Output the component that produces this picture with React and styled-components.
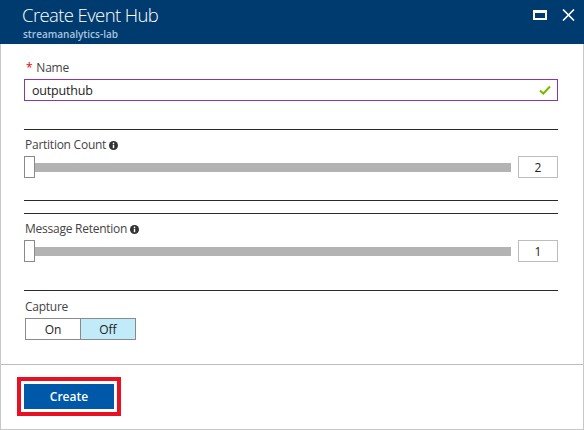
import React, { useState } from 'react';
import styled, { createGlobalStyle } from 'styled-components';

const GlobalStyle = createGlobalStyle`
  html, body {
    margin: 0;
    padding: 0;
    background: #fff;
  }
  body {
    font-family: 'Segoe UI', 'Open Sans', 'Liberation Sans', sans-serif;
    color: #333;
  }
`;

const Blade = styled.div`
  width: 584px;
  height: 430px;
  display: flex;
  flex-direction: column;
  box-sizing: border-box;
`;

const Header = styled.div`
  height: 44px;
  background: #003b6f;
  display: flex;
  align-items: flex-start;
  justify-content: space-between;
  padding: 0 9px 0 22px;
  box-sizing: border-box;
`;

const TitleBlock = styled.div`
  display: flex;
  flex-direction: column;
`;

const Title = styled.div`
  color: #fff;
  font-size: 18.5px;
  font-weight: 300;
  line-height: 24px;
  margin-top: 3px;
  letter-spacing: -0.6px;
`;

const Subtitle = styled.div`
  color: #a9c5df;
  font-size: 10px;
  font-weight: 600;
  line-height: 12px;
  margin-top: 1px;
  margin-left: 1px;
`;

const WindowButtons = styled.div`
  display: flex;
  align-items: center;
  gap: 15px;
  margin-top: 9px;
`;

const MaxIcon = styled.div`
  width: 14px;
  height: 10px;
  box-sizing: border-box;
  border: 2px solid #fff;
  border-top-width: 3px;
`;

const Body = styled.div`
  flex: 1;
  display: flex;
  flex-direction: column;
  border-left: 1px solid #c8c8c8;
  border-right: 1px solid #c8c8c8;
`;

const Content = styled.div`
  padding: 16px 25px 0 23px;
  display: flex;
  flex-direction: column;
`;

const Label = styled.div`
  font-size: 12px;
  line-height: 16px;
  height: 16px;
  color: #444;
  display: flex;
  align-items: center;
  gap: 3px;
  letter-spacing: -0.25px;
  margin-top: ${(p) => p.$top || 0}px;
  margin-left: 1px;
`;

const Required = styled.span`
  color: #e00;
  font-size: 12px;
  margin-right: 4px;
  margin-left: 1px;
`;

const InputBox = styled.div`
  margin-top: 3px;
  height: 22px;
  box-sizing: border-box;
  border: 1px solid #8c35a9;
  display: flex;
  align-items: center;
  justify-content: space-between;
  padding: 0 6px 0 7px;
  font-size: 12.5px;
  letter-spacing: -0.2px;
  color: #222;
`;

const Rule = styled.div`
  height: 1px;
  background: #2a2a2a;
  margin-top: ${(p) => p.$top || 0}px;
`;

const SliderRow = styled.div`
  margin-top: 3px;
  height: 22px;
  display: flex;
  align-items: center;
  gap: 7px;
`;

const Track = styled.div`
  flex: 1;
  height: 22px;
  display: flex;
  align-items: center;
`;

const Thumb = styled.div`
  width: 11px;
  height: 22px;
  box-sizing: border-box;
  border: 1px solid #8a8a8a;
  background: #fff;
  flex-shrink: 0;
`;

const Fill = styled.div`
  flex: 1;
  height: 9px;
  background: #b3b3b3;
`;

const NumberBox = styled.div`
  width: 40px;
  height: 22px;
  box-sizing: border-box;
  border: 1px solid #bdbdbd;
  display: flex;
  align-items: center;
  justify-content: center;
  font-size: 12px;
  color: #222;
`;

const Toggle = styled.div`
  margin-top: 3px;
  display: flex;
  width: 111px;
  height: 22px;
  box-sizing: border-box;
  border: 1px solid #8a8a8a;
  margin-left: 1px;
`;

const ToggleOption = styled.div`
  flex: 1;
  display: flex;
  align-items: center;
  justify-content: center;
  font-size: 12px;
  color: #222;
  background: ${(p) => (p.$active ? '#c1ebf8' : '#fff')};
  border-left: ${(p) => (p.$divided ? '1px solid #8a8a8a' : 'none')};
`;

const Footer = styled.div`
  margin-top: 24px;
  border-top: 1px solid #bdbdbd;
  padding: 12px 0 0 16px;
  flex: 1;
  border-bottom: 1px solid #c8c8c8;
`;

const Highlight = styled.div`
  display: inline-flex;
  border: 4px solid #e81123;
  padding: 3px;
  background: #fff;
`;

const PrimaryButton = styled.button`
  width: 90px;
  height: 25px;
  border: none;
  background: #0058a8;
  color: #fff;
  font-family: inherit;
  font-size: 12px;
  font-weight: 600;
  padding: 0;
  cursor: pointer;
`;

const InfoIcon = () => (
  <svg width="9" height="9" viewBox="0 0 10 10">
    <circle cx="5" cy="5" r="5" fill="#333" />
    <rect x="4.2" y="4.2" width="1.6" height="3.8" fill="#fff" />
    <circle cx="5" cy="2.7" r="0.9" fill="#fff" />
  </svg>
);

const CheckIcon = () => (
  <svg width="12" height="10" viewBox="0 0 12 10">
    <path d="M1 5.5 L4.3 8.5 L11 1.5" fill="none" stroke="#7ab800" strokeWidth="2" />
  </svg>
);

const CloseIcon = () => (
  <svg width="13" height="12" viewBox="0 0 13 12">
    <path d="M1 0.5 L12 11.5 M12 0.5 L1 11.5" stroke="#fff" strokeWidth="1.6" />
  </svg>
);

const Slider = ({ value }) => (
  <SliderRow>
    <Track>
      <Thumb />
      <Fill />
    </Track>
    <NumberBox>{value}</NumberBox>
  </SliderRow>
);

export default function App() {
  const [capture, setCapture] = useState(false);

  return (
    <>
      <GlobalStyle />
      <Blade>
        <Header>
          <TitleBlock>
            <Title>Create Event Hub</Title>
            <Subtitle>streamanalytics-lab</Subtitle>
          </TitleBlock>
          <WindowButtons>
            <MaxIcon />
            <CloseIcon />
          </WindowButtons>
        </Header>
        <Body>
          <Content>
            <Label>
              <span>
                <Required>*</Required>Name
              </span>
            </Label>
            <InputBox>
              <span>outputhub</span>
              <CheckIcon />
            </InputBox>
            <Rule $top={28} />

            <Label $top={7}>
              Partition Count <InfoIcon />
            </Label>
            <Slider value={2} />
            <Rule $top={22} />
            <Rule $top={12} />

            <Label $top={7}>
              Message Retention <InfoIcon />
            </Label>
            <Slider value={1} />
            <Rule $top={28} />

            <Label $top={8}>Capture</Label>
            <Toggle>
              <ToggleOption $active={capture} onClick={() => setCapture(true)}>
                On
              </ToggleOption>
              <ToggleOption $divided $active={!capture} onClick={() => setCapture(false)}>
                Off
              </ToggleOption>
            </Toggle>
          </Content>
          <Footer>
            <Highlight>
              <PrimaryButton>Create</PrimaryButton>
            </Highlight>
          </Footer>
        </Body>
      </Blade>
    </>
  );
}
